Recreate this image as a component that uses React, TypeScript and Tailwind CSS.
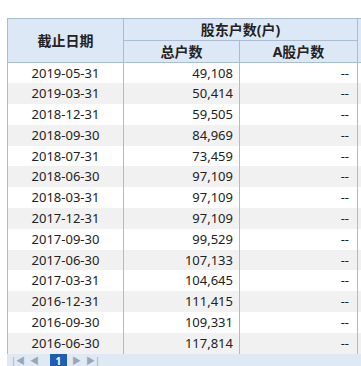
import React from "react"

const rows: [string, string][] = [
  ["2019-05-31", "49,108"],
  ["2019-03-31", "50,414"],
  ["2018-12-31", "59,505"],
  ["2018-09-30", "84,969"],
  ["2018-07-31", "73,459"],
  ["2018-06-30", "97,109"],
  ["2018-03-31", "97,109"],
  ["2017-12-31", "97,109"],
  ["2017-09-30", "99,529"],
  ["2017-06-30", "107,133"],
  ["2017-03-31", "104,645"],
  ["2016-12-31", "111,415"],
  ["2016-09-30", "109,331"],
  ["2016-06-30", "117,814"],
]

const font = { fontFamily: '"Noto Sans", "Noto Sans CJK SC", sans-serif' }

export default function App() {
  return (
    <div className="w-[361px] h-[366px] overflow-hidden bg-white pt-[18px] pl-[7px] text-[#222]" style={font}>
      <div className="w-[410px]">
        <table className="w-[410px] border-collapse table-fixed text-[13px]">
          <colgroup>
            <col className="w-[116px]" />
            <col className="w-[116px]" />
            <col className="w-[118px]" />
            <col className="w-[60px]" />
          </colgroup>
          <thead>
            <tr className="h-[22px] bg-[#dde8f6]">
              <th rowSpan={2} className="border border-[#a8bcd4] text-[14px] font-bold">截止日期</th>
              <th colSpan={2} className="border border-[#a8bcd4] text-[14px] font-bold leading-none">股东户数(户)</th>
              <th rowSpan={2} className="border border-[#a8bcd4]"></th>
            </tr>
            <tr className="h-[22px] bg-[#dde8f6]">
              <th className="border border-[#a8bcd4] text-[14px] font-bold leading-none">总户数</th>
              <th className="border border-[#a8bcd4] text-[14px] font-bold leading-none">A股户数</th>
            </tr>
          </thead>
          <tbody>
            {rows.map(([d, n], i) => (
              <tr key={d} className={`h-[20.8px] ${i % 2 === 1 ? "bg-[#f1f1f1]" : "bg-white"}`}>
                <td className="border-x border-[#a8bcd4] text-center leading-none">{d}</td>
                <td className="border-x border-[#a8bcd4] text-right pr-[6px] leading-none">{n}</td>
                <td className="border-x border-[#a8bcd4] text-right pr-[8px] leading-none">--</td>
                <td className="border-x border-[#a8bcd4]"></td>
              </tr>
            ))}
          </tbody>
        </table>
        <div className="h-[14px] bg-[#dfe8f5] flex items-start gap-[5px] pl-[4px] text-[9px] text-[#9aa6b6]">
          <span className="leading-[14px]">|◀</span>
          <span className="leading-[14px]">◀</span>
          <span className="ml-[6px] w-[17px] h-[14px] bg-[#1f5fb0] text-white text-center text-[10px] font-bold leading-[14px]">1</span>
          <span className="leading-[14px]">▶</span>
          <span className="leading-[14px]">▶|</span>
        </div>
      </div>
    </div>
  )
}
